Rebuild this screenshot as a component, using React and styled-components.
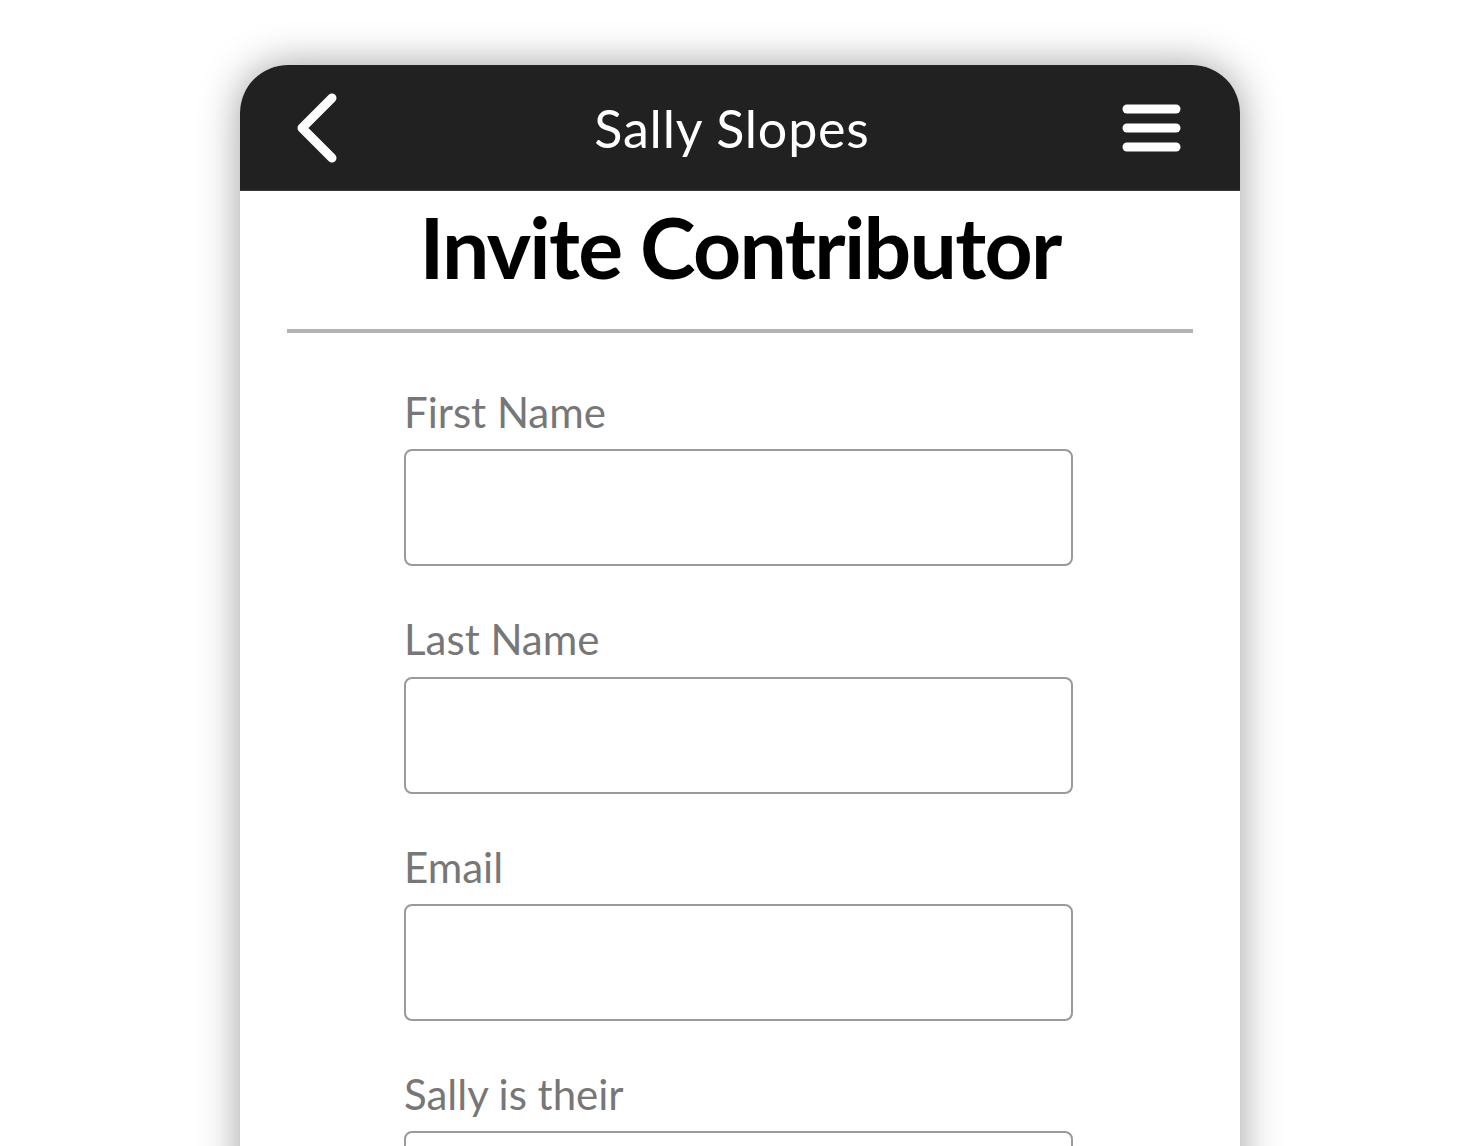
import React from "react";
import styled, { createGlobalStyle } from "styled-components";

const Global = createGlobalStyle`
  html, body {
    margin: 0;
    padding: 0;
    background: #ffffff;
    overflow: hidden;
  }
  body {
    font-family: Lato, "Noto Sans", sans-serif;
  }
`;

const Page = styled.div`
  width: 1480px;
  height: 1146px;
  padding-top: 65px;
  box-sizing: border-box;
  display: flex;
  justify-content: center;
  overflow: hidden;
`;

const Phone = styled.div`
  width: 1000px;
  height: 1200px;
  flex: none;
  background: #ffffff;
  border-radius: 48px 48px 0 0;
  box-shadow: 0 0 40px rgba(0, 0, 0, 0.38);
  overflow: hidden;
  display: flex;
  flex-direction: column;
`;

const Header = styled.header`
  height: 126px;
  flex: none;
  background: #212121;
  border-bottom: 1px solid #3a3a3a;
  box-sizing: border-box;
  display: grid;
  grid-template-columns: 160px 1fr 160px;
  align-items: center;
`;

const IconButton = styled.button`
  background: none;
  border: 0;
  padding: 0;
  margin: 0;
  display: flex;
  align-items: center;
  justify-content: ${(p) => (p.$end ? "flex-end" : "flex-start")};
  padding-left: ${(p) => (p.$end ? "0" : "56px")};
  padding-right: ${(p) => (p.$end ? "58px" : "0")};
  cursor: pointer;
`;

const HeaderTitle = styled.h1`
  margin: 0;
  text-align: center;
  color: #ffffff;
  font-family: Lato, sans-serif;
  font-weight: 400;
  font-size: 52px;
  letter-spacing: 0.8px;
  line-height: 1.2;
  padding-top: 1px;
  padding-right: 16px;
`;

const Content = styled.main`
  display: flex;
  flex-direction: column;
  align-items: center;
  padding: 6px 47px 0;
`;

const Title = styled.h2`
  margin: 0;
  font-family: Lato, sans-serif;
  font-weight: 700;
  font-size: 84px;
  line-height: 1.2;
  color: #000000;
  letter-spacing: -1.7px;
`;

const Divider = styled.hr`
  align-self: stretch;
  margin: 31px 0 0;
  border: 0;
  height: 4px;
  background: #b3b3b3;
`;

const Form = styled.form`
  width: 669px;
  margin-top: 54px;
  margin-right: 3px;
  display: flex;
  flex-direction: column;
  gap: 48px;
`;

const Field = styled.div`
  display: flex;
  flex-direction: column;
  gap: 12px;
`;

const Label = styled.label`
  font-family: Lato, sans-serif;
  font-size: 42px;
  letter-spacing: 0;
  line-height: 1.2;
  color: #777777;
`;

const Input = styled.input`
  height: 117px;
  box-sizing: border-box;
  border: 2px solid #9a9a9a;
  border-radius: 8px;
  background: #ffffff;
  font-family: Lato, sans-serif;
  font-size: 36px;
  padding: 0 20px;
  outline: none;
`;

function BackIcon() {
  return (
    <svg width="44" height="72" viewBox="0 0 44 72" fill="none">
      <path
        d="M36 6 L6 36 L36 66"
        stroke="#ffffff"
        strokeWidth="9"
        strokeLinecap="round"
        strokeLinejoin="round"
      />
    </svg>
  );
}

function MenuIcon() {
  return (
    <svg width="60" height="50" viewBox="0 0 60 50" fill="none">
      <g stroke="#ffffff" strokeWidth="9" strokeLinecap="round">
        <line x1="5" y1="6" x2="54" y2="6" />
        <line x1="5" y1="25" x2="54" y2="25" />
        <line x1="5" y1="44" x2="54" y2="44" />
      </g>
    </svg>
  );
}

const fields = ["First Name", "Last Name", "Email", "Sally is their"];

export default function App() {
  return (
    <>
      <Global />
      <Page>
        <Phone>
          <Header>
            <IconButton aria-label="Back">
              <BackIcon />
            </IconButton>
            <HeaderTitle>Sally Slopes</HeaderTitle>
            <IconButton $end aria-label="Menu">
              <MenuIcon />
            </IconButton>
          </Header>
          <Content>
            <Title>Invite Contributor</Title>
            <Divider />
            <Form onSubmit={(e) => e.preventDefault()}>
              {fields.map((f) => (
                <Field key={f}>
                  <Label>{f}</Label>
                  <Input type="text" />
                </Field>
              ))}
            </Form>
          </Content>
        </Phone>
      </Page>
    </>
  );
}
